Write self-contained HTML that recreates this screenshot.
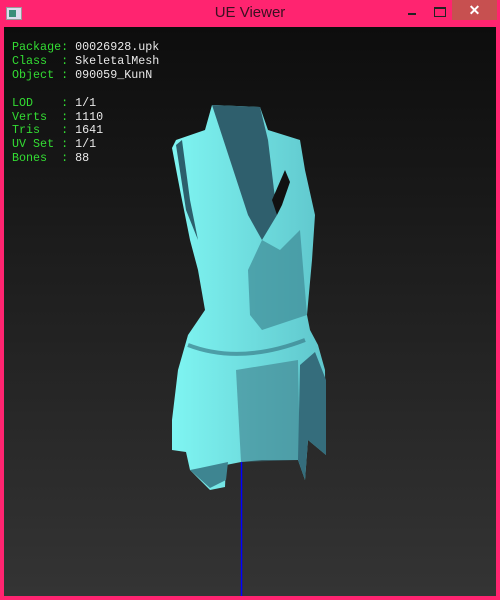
<!DOCTYPE html>
<html><head><style>
html,body{margin:0;padding:0;width:500px;height:600px;overflow:hidden;background:#ff2470}
.title{position:absolute;left:0;top:0;width:500px;height:27px;background:#ff2470}
.title .t{position:absolute;left:0;width:500px;top:4px;text-align:center;font:15px "Liberation Sans",sans-serif;color:#3a1020}
.view{position:absolute;left:4px;top:27px;width:492px;height:569px;background:linear-gradient(#0d0d0d,#343434)}
.txt{position:absolute;left:8px;top:14px;font:11.7px/13.9px "Liberation Mono",monospace;color:#e8e8e8;white-space:pre}
.g{color:#33dd33}
</style></head><body>
<div class="title">
<div style="position:absolute;left:6px;top:7px;width:14px;height:11px;background:#dde;border:1px solid #999"><div style="margin:2px;width:7px;height:7px;background:#3a8f7a"></div></div>
<div class="t">UE Viewer</div>
<div style="position:absolute;left:408px;top:13px;width:8px;height:2px;background:#222"></div>
<div style="position:absolute;left:434px;top:7px;width:10px;height:7px;border:1px solid #222;border-top-width:2px"></div>
<div style="position:absolute;left:452px;top:0;width:45px;height:20px;background:#c75050;color:#fff;font:bold 14px 'Liberation Sans',sans-serif;text-align:center;line-height:20px">✕</div>
</div>
<div class="view">
<div class="txt"><span class="g">Package:</span> 00026928.upk
<span class="g">Class  :</span> SkeletalMesh
<span class="g">Object :</span> 090059_KunN

<span class="g">LOD    :</span> 1/1
<span class="g">Verts  :</span> 1110
<span class="g">Tris   :</span> 1641
<span class="g">UV Set :</span> 1/1
<span class="g">Bones  :</span> 88</div>
</div>
<svg style="position:absolute;left:0;top:0" width="500" height="600">
<defs>
<linearGradient id="a" x1="0" x2="1"><stop offset="0" stop-color="#7ff5f2"/><stop offset="1" stop-color="#5fc6cc"/></linearGradient>
</defs>
<line x1="241.5" y1="455" x2="241.5" y2="596" stroke="#0000ff" stroke-width="1.5"/>
<polygon fill="url(#a)" points="212,105 260,107 268,130 300,140 305,170 315,215 312,260 307,315 310,330 318,345 325,370 326,455 308,440 305,480 298,460 262,460 241,462 226,465 225,487 210,490 190,470 186,452 172,450 172,420 178,370 188,335 205,310 198,270 190,240 180,190 172,148 176,140 205,130"/>
<polygon fill="#2f5f6d" points="212,105 260,107 268,140 277,215 262,240 248,215 230,160"/>
<polygon fill="#111" points="285,170 290,182 282,205 277,215 272,200"/>
<polygon fill="#3e8a96" opacity="0.7" points="262,240 280,250 300,230 307,315 262,330 250,315 248,270"/>
<polygon fill="#3d7d8a" opacity="0.6" points="236,370 298,360 300,460 241,462"/>
<polygon fill="#356d7c" points="300,365 315,352 326,380 326,455 308,440 305,480 298,460"/>
<path d="M188,345 Q240,365 305,340" stroke="#3a7f8c" stroke-width="4" fill="none" opacity="0.7"/>
<polygon fill="#2c5f6c" points="176,145 182,140 190,200 198,240 186,210"/>
<polygon fill="#3e8591" points="190,470 200,468 228,462 226,480 210,488"/>
</svg>
</body></html>
